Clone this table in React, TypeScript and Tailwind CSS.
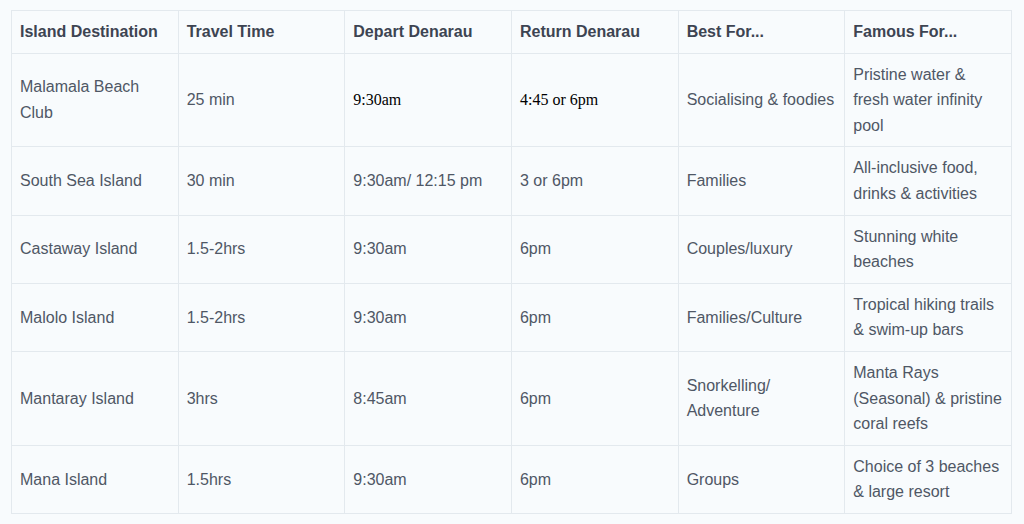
type Cell = { text: string; serif?: boolean };

type Row = {
  island: string;
  travel: string;
  depart: Cell;
  ret: Cell;
  best: string;
  famous: string;
};

const rows: Row[] = [
  {
    island: "Malamala Beach Club",
    travel: "25 min",
    depart: { text: "9:30am", serif: true },
    ret: { text: "4:45 or 6pm", serif: true },
    best: "Socialising & foodies",
    famous: "Pristine water & fresh water infinity pool",
  },
  {
    island: "South Sea Island",
    travel: "30 min",
    depart: { text: "9:30am/ 12:15 pm" },
    ret: { text: "3 or 6pm" },
    best: "Families",
    famous: "All-inclusive food, drinks & activities",
  },
  {
    island: "Castaway Island",
    travel: "1.5-2hrs",
    depart: { text: "9:30am" },
    ret: { text: "6pm" },
    best: "Couples/luxury",
    famous: "Stunning white beaches",
  },
  {
    island: "Malolo Island",
    travel: "1.5-2hrs",
    depart: { text: "9:30am" },
    ret: { text: "6pm" },
    best: "Families/Culture",
    famous: "Tropical hiking trails & swim-up bars",
  },
  {
    island: "Mantaray Island",
    travel: "3hrs",
    depart: { text: "8:45am" },
    ret: { text: "6pm" },
    best: "Snorkelling/ Adventure",
    famous: "Manta Rays (Seasonal) & pristine coral reefs",
  },
  {
    island: "Mana Island",
    travel: "1.5hrs",
    depart: { text: "9:30am" },
    ret: { text: "6pm" },
    best: "Groups",
    famous: "Choice of 3 beaches & large resort",
  },
];

const headers = [
  "Island Destination",
  "Travel Time",
  "Depart Denarau",
  "Return Denarau",
  "Best For...",
  "Famous For...",
];

const td = "border border-[#e3e9ee] px-2 py-2 align-middle";

export default function App() {
  return (
    <div className="min-h-[524px] bg-[#f8fbfd] pl-[11px] pt-[10px] font-['Liberation_Sans',Arial,sans-serif] text-[#4f5765]">
      <table className="w-[1001px] table-fixed border-collapse text-left text-[16px] leading-[25.6px]">
        <thead>
          <tr>
            {headers.map((h) => (
              <th key={h} className={`${td} font-bold text-[#3d4452]`}>
                {h}
              </th>
            ))}
          </tr>
        </thead>
        <tbody>
          {rows.map((r) => (
            <tr key={r.island}>
              <td className={td}>{r.island}</td>
              <td className={td}>{r.travel}</td>
              {[r.depart, r.ret].map((c, i) => (
                <td
                  key={i}
                  className={
                    c.serif
                      ? `${td} font-['Liberation_Serif','Times_New_Roman',serif] text-black`
                      : td
                  }
                >
                  {c.text}
                </td>
              ))}
              <td className={td}>{r.best}</td>
              <td className={td}>{r.famous}</td>
            </tr>
          ))}
        </tbody>
      </table>
    </div>
  );
}
